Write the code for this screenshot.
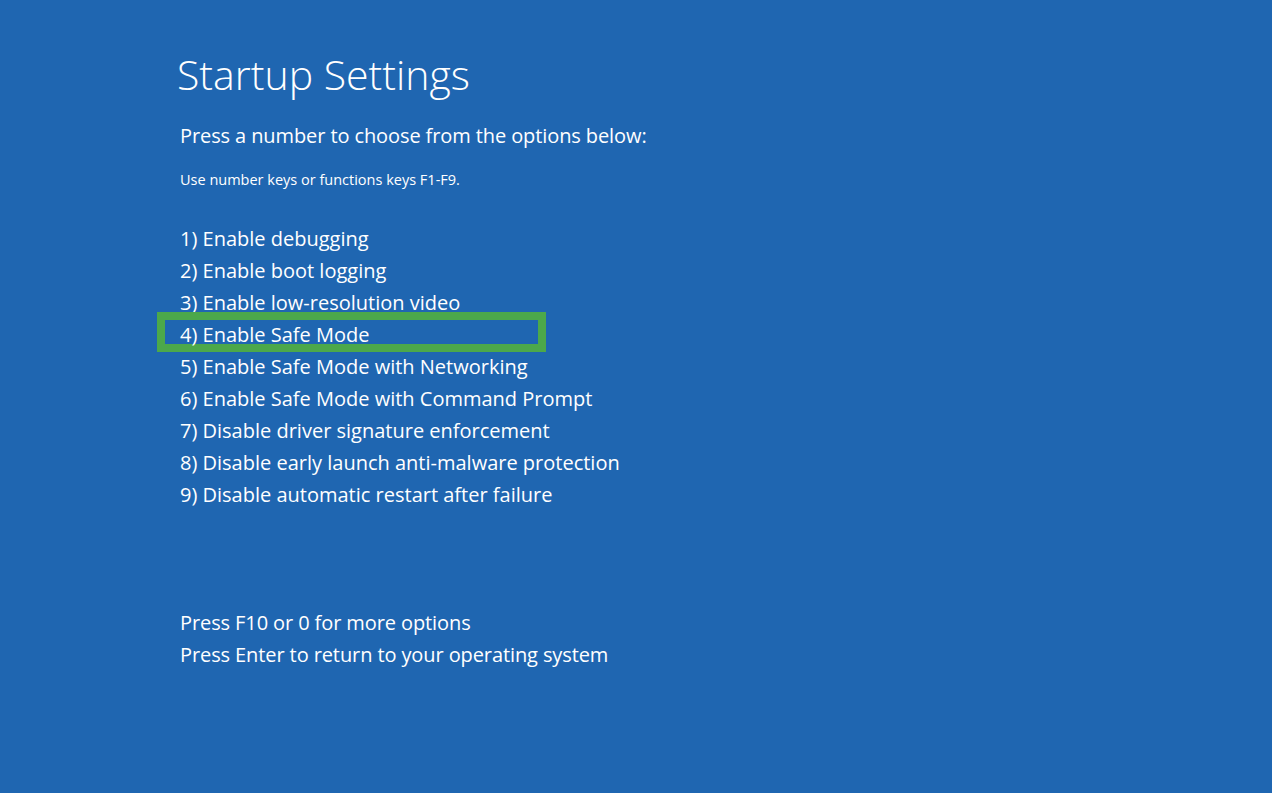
export default function App() {
  const items = [
    "1) Enable debugging",
    "2) Enable boot logging",
    "3) Enable low-resolution video",
    "4) Enable Safe Mode",
    "5) Enable Safe Mode with Networking",
    "6) Enable Safe Mode with Command Prompt",
    "7) Disable driver signature enforcement",
    "8) Disable early launch anti-malware protection",
    "9) Disable automatic restart after failure",
  ];
  return (
    <div
      className="w-[1272px] h-[793px] bg-[#1f66b1] text-white overflow-hidden pl-[180px] pt-[48px]"
      style={{ fontFamily: '"Open Sans", "Noto Sans", sans-serif' }}
    >
      <h1 className="text-[41px] leading-[52px] font-light -ml-[3px]">Startup Settings</h1>
      <p className="mt-[20px] text-[20px] leading-[32px] tracking-[-0.1px]">Press a number to choose from the options below:</p>
      <p className="mt-[18px] text-[14.5px] leading-[20px]">Use number keys or functions keys F1-F9.</p>
      <ul className="mt-[33px] text-[20px] leading-[32px]">
        {items.map((t, i) => (
          <li key={i} className="relative">
            {i === 3 && (
              <span className="absolute -left-[23px] top-[-7px] w-[389px] h-[40px] border-[8px] border-[#4ca84a]" />
            )}
            <span className="relative">{t}</span>
          </li>
        ))}
      </ul>
      <div className="mt-[96px] text-[20px] leading-[32px] tracking-[-0.1px]">
        <p>Press F10 or 0 for more options</p>
        <p>Press Enter to return to your operating system</p>
      </div>
    </div>
  );
}
